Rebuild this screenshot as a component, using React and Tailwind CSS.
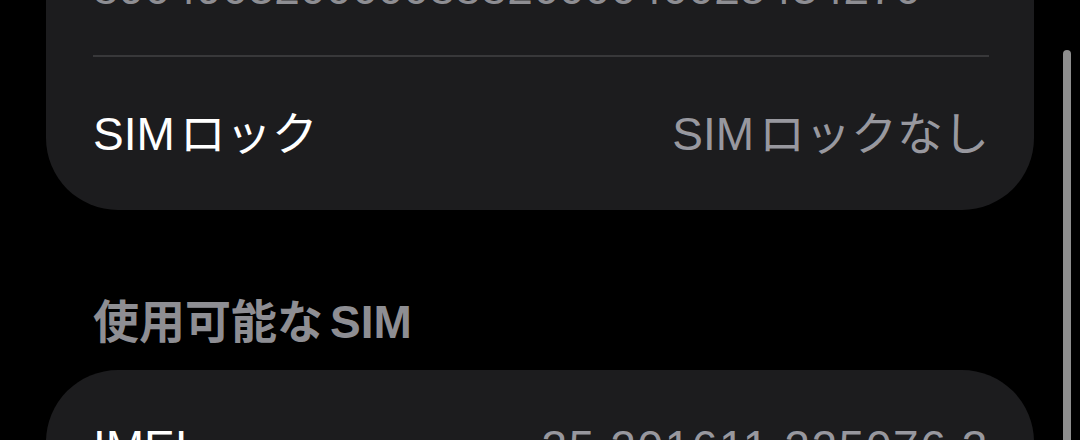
import React from "react";

const font = "font-['Liberation_Sans','Noto_Sans_CJK_JP',sans-serif]";

// Latin + kana with the small gap iOS puts between them
const Mixed = ({ latin, kana }) => (
  <>
    <span className="mr-[5px]">{latin}</span>
    {kana}
  </>
);

const App = () => {
  return (
    <div className={`relative w-[1080px] h-[440px] overflow-hidden bg-black px-[46px] ${font}`}>
      {/* SIM info card (scrolled, top cut off) */}
      <div className="bg-[#1c1c1e] rounded-b-[72px] pl-[47px] pr-[45px]">
        <div className="h-[55px] flex items-end pb-[44px]">
          <span className="text-[46px] leading-none tracking-[0.3px] text-[#8e8e93] whitespace-nowrap">
            89049032006008882600040025434270
          </span>
        </div>
        <div className="h-[2px] bg-[#38383a]" />
        <div className="h-[153px] flex items-center justify-between">
          <span className="text-[46px] leading-none text-white">
            <Mixed latin="SIM" kana="ロック" />
          </span>
          <span className="text-[46px] leading-none text-[#98989f]">
            <Mixed latin="SIM" kana="ロックなし" />
          </span>
        </div>
      </div>

      {/* Section header */}
      <div className="mt-[89px] pl-[47px] text-[46px] leading-none font-semibold text-[#8e8e93]">
        使用可能な<span className="ml-[7px]">SIM</span>
      </div>

      {/* Available SIM card */}
      <div className="mt-[25px] h-[200px] bg-[#1c1c1e] rounded-t-[72px] pl-[47px] pr-[45px] pt-[54px]">
        <div className="flex items-center justify-between">
          <span className="text-[46px] leading-none text-white">IMEI</span>
          <span className="text-[46px] leading-none tracking-[1.6px] text-[#98989f]">35 201611 225076 3</span>
        </div>
      </div>

      {/* scroll indicator */}
      <div className="absolute left-[1063px] top-[50px] w-[8px] h-[420px] rounded-full bg-[#8e8e8e]" />
    </div>
  );
};

export default App;
